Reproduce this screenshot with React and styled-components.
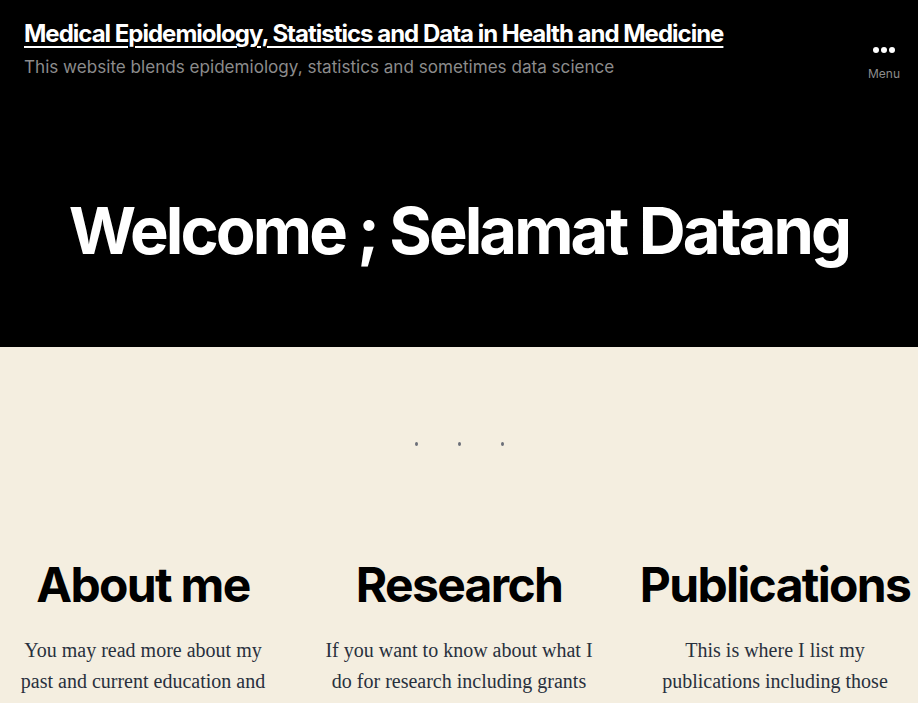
import React from "react";
import styled, { createGlobalStyle } from "styled-components";

const GlobalStyle = createGlobalStyle`
  html, body {
    margin: 0;
    padding: 0;
    background: #f4eee0;
  }
  * {
    box-sizing: border-box;
  }
`;

const columns = [
  {
    title: "About me",
    text: "You may read more about my past and current education and",
  },
  {
    title: "Research",
    text: "If you want to know about what I do for research including grants",
  },
  {
    title: "Publications",
    text: "This is where I list my publications including those",
  },
];

const App = () => {
  return (
    <>
      <GlobalStyle />
      <Page>
        <Header>
          <Branding>
            <SiteTitle href="#">
              Medical Epidemiology, Statistics and Data in Health and Medicine
            </SiteTitle>
            <Tagline>
              This website blends epidemiology, statistics and sometimes data
              science
            </Tagline>
          </Branding>
          <MenuButton>
            <Dots>
              <Dot />
              <Dot />
              <Dot />
            </Dots>
            <MenuLabel>Menu</MenuLabel>
          </MenuButton>
        </Header>
        <Hero>
          <HeroTitle>Welcome ; Selamat Datang</HeroTitle>
        </Hero>
        <Main>
          <Separator>
            <SepDot />
            <SepDot />
            <SepDot />
          </Separator>
          <Columns>
            {columns.map((c) => (
              <Column key={c.title}>
                <ColumnTitle>{c.title}</ColumnTitle>
                <ColumnText>{c.text}</ColumnText>
              </Column>
            ))}
          </Columns>
        </Main>
      </Page>
    </>
  );
};

export default App;

const Page = styled.div`
  min-height: 100vh;
  background: #f4eee0;
  overflow: hidden;
`;

const Header = styled.header`
  background: #000;
  display: flex;
  justify-content: space-between;
  align-items: flex-start;
  padding: 19px 24px 0 24px;
`;

const Branding = styled.div`
  display: flex;
  flex-direction: column;
`;

const SiteTitle = styled.a`
  font-family: Inter, "Noto Sans", sans-serif;
  font-weight: 700;
  font-size: 24px;
  line-height: 30px;
  letter-spacing: -1px;
  color: #fff;
  text-decoration: underline;
  text-decoration-thickness: 2px;
  text-underline-offset: 4px;
`;

const Tagline = styled.p`
  margin: 4px 0 0 0;
  font-family: Inter, "Noto Sans", sans-serif;
  font-size: 17.1px;
  line-height: 28px;
  color: #8c8c8c;
`;

const MenuButton = styled.button`
  all: unset;
  margin-top: 28px;
  margin-right: -6px;
  display: flex;
  flex-direction: column;
  align-items: center;
  cursor: pointer;
`;

const Dots = styled.span`
  display: flex;
  gap: 2px;
`;

const Dot = styled.span`
  width: 6px;
  height: 6px;
  border-radius: 50%;
  background: #fff;
`;

const MenuLabel = styled.span`
  margin-top: 13px;
  font-family: Inter, "Noto Sans", sans-serif;
  font-size: 12px;
  color: #8c8c8c;
`;

const Hero = styled.section`
  background: #000;
  padding: 110px 0 76px 0;
  display: flex;
  justify-content: center;
`;

const HeroTitle = styled.h1`
  margin: 0;
  font-family: Inter, "Noto Sans", sans-serif;
  font-weight: 700;
  font-size: 65px;
  line-height: 80px;
  letter-spacing: -0.045em;
  color: #fff;
  white-space: nowrap;
`;

const Main = styled.main`
  padding-top: 95px;
`;

const Separator = styled.div`
  display: flex;
  justify-content: center;
  gap: 40px;
`;

const SepDot = styled.span`
  width: 3px;
  height: 4px;
  border-radius: 50%;
  background: #6b6f78;
`;

const Columns = styled.div`
  margin-top: 109px;
  display: grid;
  grid-template-columns: repeat(3, 1fr);
  column-gap: 30px;
`;

const Column = styled.div`
  display: flex;
  flex-direction: column;
  align-items: center;
  text-align: center;
`;

const ColumnTitle = styled.h2`
  margin: 0;
  font-family: Inter, "Noto Sans", sans-serif;
  font-weight: 700;
  font-size: 48px;
  line-height: 60px;
  letter-spacing: -0.035em;
  color: #000;
  white-space: nowrap;
`;

const ColumnText = styled.p`
  margin: 20px 0 0 0;
  max-width: 270px;
  font-family: "Liberation Serif", "Times New Roman", serif;
  font-size: 20px;
  line-height: 31px;
  color: #28303d;
`;
